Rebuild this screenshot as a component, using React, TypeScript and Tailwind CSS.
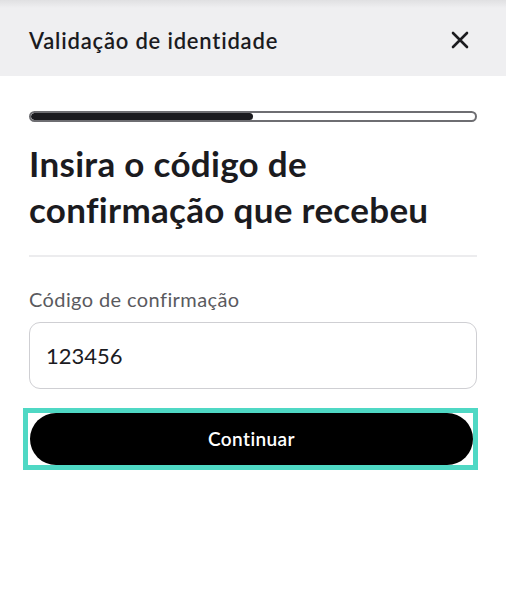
import React from "react";

export default function App() {
  return (
    <div className="w-[506px] h-[592px] bg-white overflow-hidden" style={{ fontFamily: "Lato, 'Noto Sans', sans-serif" }}>
      <div className="h-[8px] bg-gradient-to-b from-[#e0e0e2] to-[#efeff1]" />
      <div className="h-[68px] bg-[#efeff1] flex items-center justify-between pl-[29px] pr-[37px] pb-[4px]">
        <span className="text-[22px] font-semibold text-[#1b1b1f] tracking-[0.8px]">Validação de identidade</span>
        <svg width="18" height="18" viewBox="0 0 18 18" fill="none" stroke="#1b1b1f" strokeWidth="2.6" strokeLinecap="round">
          <path d="M2 2 L16 16 M16 2 L2 16" />
        </svg>
      </div>
      <div className="px-[29px] pt-[35px]">
        <div className="h-[11px] w-full rounded-full border-2 border-[#6e6e72] bg-white flex overflow-hidden">
          <div className="w-[50%] h-full bg-[#1b1b1f] rounded-full" />
        </div>
        <h1 className="mt-[18px] text-[35px] leading-[46px] font-bold text-[#1b1b1f] tracking-[0.3px]">
          Insira o código de
          <br />
          confirmação que recebeu
        </h1>
        <div className="mt-[23px] h-[2px] bg-[#ececee]" />
        <div className="mt-[30px] text-[20px] leading-[24px] text-[#5a5a5e] tracking-[0.4px]">Código de confirmação</div>
        <div className="mt-[11px] h-[67px] rounded-[11px] border border-[#cfcfd3] flex items-center px-[16px]">
          <span className="text-[22px] text-[#1b1b1f]">123456</span>
        </div>
      </div>
      <div className="ml-[23px] mr-[28px] mt-[19px] h-[62px] border-[5px] border-[#4fd8c4] flex">
        <div className="flex-1 bg-black rounded-full flex items-center justify-center ml-[2px]">
          <span className="text-white text-[19px] font-semibold tracking-[0.4px]">Continuar</span>
        </div>
      </div>
    </div>
  );
}
